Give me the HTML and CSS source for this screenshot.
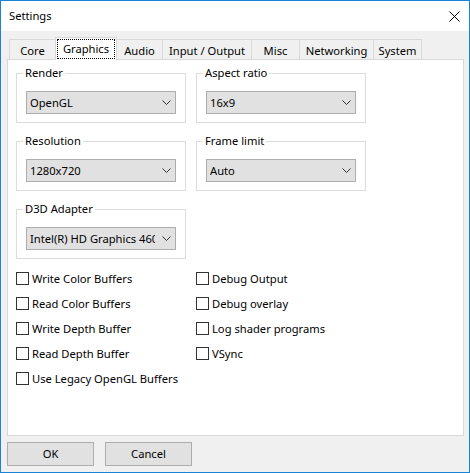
FILE: index.html
```html
<!DOCTYPE html>
<html>
<head>
<meta charset="utf-8">
<link rel="stylesheet" href="styles.css">
</head>
<body>
<div class="window">
  <div class="titlebar">
    <span class="title">Settings</span>
    <svg class="close" width="11" height="11" viewBox="0 0 11 11"><path d="M0.5 0.5 L10.5 10.5 M10.5 0.5 L0.5 10.5" stroke="#000" stroke-width="1"/></svg>
  </div>
  <div class="client">
    <div class="tabs">
      <div class="tab t-core">Core</div>
      <div class="tab tab-active t-graphics"><span class="focus">Graphics</span></div>
      <div class="tab t-audio">Audio</div>
      <div class="tab t-io">Input / Output</div>
      <div class="tab t-misc">Misc</div>
      <div class="tab t-net">Networking</div>
      <div class="tab t-sys">System</div>
    </div>
    <div class="panel">
      <div class="groups">
        <fieldset class="group">
          <legend>Render</legend>
          <div class="combo"><span class="combo-text">OpenGL</span><svg class="chev" width="9" height="5" viewBox="0 0 9 5"><path d="M0.5 0.5 L4.5 4.5 L8.5 0.5" fill="none" stroke="#333" stroke-width="1"/></svg></div>
        </fieldset>
        <fieldset class="group">
          <legend>Aspect ratio</legend>
          <div class="combo"><span class="combo-text">16x9</span><svg class="chev" width="9" height="5" viewBox="0 0 9 5"><path d="M0.5 0.5 L4.5 4.5 L8.5 0.5" fill="none" stroke="#333" stroke-width="1"/></svg></div>
        </fieldset>
        <fieldset class="group">
          <legend>Resolution</legend>
          <div class="combo"><span class="combo-text">1280x720</span><svg class="chev" width="9" height="5" viewBox="0 0 9 5"><path d="M0.5 0.5 L4.5 4.5 L8.5 0.5" fill="none" stroke="#333" stroke-width="1"/></svg></div>
        </fieldset>
        <fieldset class="group">
          <legend>Frame limit</legend>
          <div class="combo"><span class="combo-text">Auto</span><svg class="chev" width="9" height="5" viewBox="0 0 9 5"><path d="M0.5 0.5 L4.5 4.5 L8.5 0.5" fill="none" stroke="#333" stroke-width="1"/></svg></div>
        </fieldset>
        <fieldset class="group">
          <legend>D3D Adapter</legend>
          <div class="combo"><span class="combo-text">Intel(R) HD Graphics 4600</span><svg class="chev" width="9" height="5" viewBox="0 0 9 5"><path d="M0.5 0.5 L4.5 4.5 L8.5 0.5" fill="none" stroke="#333" stroke-width="1"/></svg></div>
        </fieldset>
      </div>
      <div class="checks">
        <label class="check"><span class="box"></span>Write Color Buffers</label>
        <label class="check"><span class="box"></span>Debug Output</label>
        <label class="check"><span class="box"></span>Read Color Buffers</label>
        <label class="check"><span class="box"></span>Debug overlay</label>
        <label class="check"><span class="box"></span>Write Depth Buffer</label>
        <label class="check"><span class="box"></span>Log shader programs</label>
        <label class="check"><span class="box"></span>Read Depth Buffer</label>
        <label class="check"><span class="box"></span>VSync</label>
        <label class="check"><span class="box"></span>Use Legacy OpenGL Buffers</label>
      </div>
    </div>
    <div class="buttons">
      <div class="btn">OK</div>
      <div class="btn">Cancel</div>
    </div>
  </div>
</div>
</body>
</html>
```
FILE: styles.css
```css
* { box-sizing: border-box; }
html, body { margin: 0; padding: 0; }
body {
  font-family: "Noto Sans", "Open Sans", sans-serif;
  font-size: 11.2px;
  color: #000;
  background: #fff;
}
.window {
  width: 470px;
  height: 473px;
  border: 1px solid #1883d7;
  background: #f0f0f0;
}
.titlebar {
  height: 30px;
  background: #fff;
  display: flex;
  align-items: center;
  padding-left: 8px;
}
.title { line-height: 16px; }
.close { margin-left: auto; margin-right: 9px; }
.client {
  padding: 6px 5px 6px 6px;
}
.tabs {
  height: 22px;
  display: flex;
  align-items: flex-end;
  padding-left: 2px;
}
.tab {
  height: 20px;
  border: 1px solid #d9d9d9;
  border-bottom: none;
  margin-right: -1px;
  background: #f0f0f0;
  display: flex;
  align-items: center;
  justify-content: center;
  padding-top: 2px;
  line-height: 16px;
  white-space: nowrap;
}
.tab-active {
  height: 23px;
  margin-bottom: -1px;
  background: #fff;
  position: relative;
  z-index: 1;
  padding-top: 0;
  padding-bottom: 1px;
}
.focus {
  outline: 1px dotted #000;
  outline-offset: 0;
  padding: 1px 5px 1px 5px;
  line-height: 16px;
}
.t-core { width: 47px; }
.t-graphics { width: 62px; }
.t-audio { width: 47px; }
.t-io { width: 90px; }
.t-misc { width: 49px; }
.t-net { width: 75px; }
.t-sys { width: 49px; }
.panel {
  height: 377px;
  background: #fff;
  border: 1px solid #d9d9d9;
  padding: 5px 8px 0 8px;
}
.groups {
  display: grid;
  grid-template-columns: 170px 170px;
  column-gap: 10px;
  row-gap: 10px;
}
.group {
  margin: 0;
  min-width: 0;
  border: 1px solid #dcdcdc;
  padding: 10px 9px 8px 9px;
}
.group legend {
  padding: 0 2px;
  margin-left: -3px;
  line-height: 16px;
}
.combo {
  height: 23px;
  border: 1px solid #adadad;
  background: #e1e1e1;
  display: flex;
  align-items: center;
  padding-left: 3px;
}
.combo-text {
  flex: 1;
  overflow: hidden;
  white-space: nowrap;
  line-height: 16px;
}
.chev { margin: 0 4px 0 7px; flex: none; }
.checks {
  margin-top: 7px;
  display: grid;
  grid-template-columns: 180px 180px;
  grid-auto-rows: 25px;
}
.check {
  display: flex;
  align-items: center;
  gap: 3px;
  line-height: 16px;
  white-space: nowrap;
}
.box {
  width: 13px;
  height: 13px;
  border: 1px solid #333;
  background: #fff;
  flex: none;
}
.buttons {
  display: flex;
  gap: 11px;
  padding-top: 6px;
}
.btn {
  width: 87px;
  height: 24px;
  border: 1px solid #adadad;
  background: #e1e1e1;
  display: flex;
  align-items: center;
  justify-content: center;
  line-height: 16px;
}
```
